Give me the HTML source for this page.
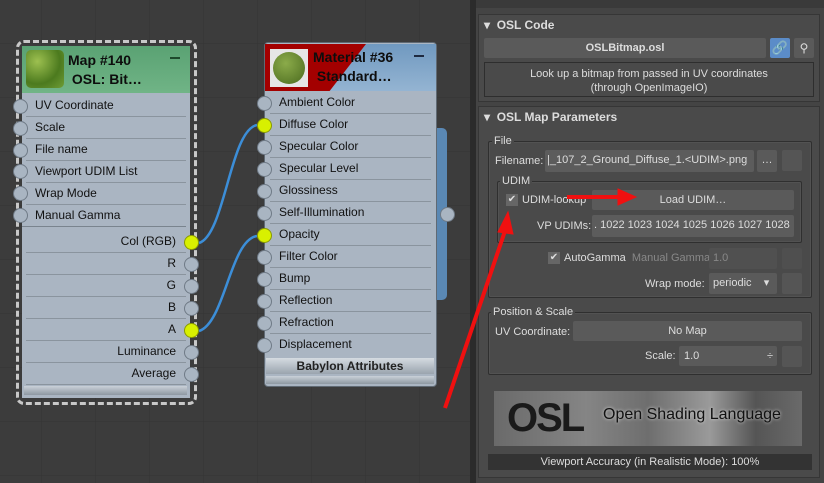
<!DOCTYPE html><html><head><style>
*{margin:0;padding:0;box-sizing:border-box}
body{width:824px;height:483px;overflow:hidden;background:#3c3c3c;font-family:"Liberation Sans",sans-serif;position:relative}
.a{position:absolute}
.row{position:absolute;height:22px;font-size:12px;color:#111;line-height:20px;border-bottom:1px solid #8a949e}
.sock{position:absolute;width:15px;height:15px;border-radius:50%;background:#a9b5c2;border:1px solid #6f7a86}
.y{background:#d8f000;border-color:#8a9a00}
.p{color:#ddd;font-size:11px}
.btn{position:absolute;background:#5a5a5a;border-radius:2px;color:#ddd;font-size:11px;text-align:center;line-height:20px}
.sq{position:absolute;width:20px;height:21px;background:#555;border-radius:2px}
.grp{position:absolute;border:1px solid #2f2f2f;border-radius:2px;box-shadow:inset 0 0 0 1px #525252}
.gl{position:absolute;background:#444;color:#ddd;font-size:11px;padding:0 2px;line-height:12px}
</style></head><body>
<svg class="a" style="left:0;top:0" width="470" height="483">
<defs><pattern id="g" width="54" height="54" patternUnits="userSpaceOnUse" x="-12" y="-10"><path d="M54 0V54M0 54H54" stroke="#343434" stroke-width="1" fill="none"/></pattern></defs>
<rect width="470" height="483" fill="url(#g)"/>
</svg>
<!-- left node -->
<div class="a" style="left:16px;top:40px;width:181px;height:365px;border:3px dashed #c8c8c8;border-radius:8px"></div>
<div class="a" style="left:22px;top:46px;width:168px;height:352px;background:#aab5c2"></div>
<div class="a" style="left:22px;top:46px;width:168px;height:47px;background:linear-gradient(#5aa273,#70b486)"></div>
<div class="a" style="left:26px;top:50px;width:38px;height:38px;border-radius:5px;background:radial-gradient(circle at 30% 30%,#9dc050,#4c7a1e 60%,#6f9d36)"></div>
<div class="a" style="left:68px;top:51px;font-weight:bold;font-size:14px;color:#0d0d0d;line-height:19px">Map #140<br>&nbsp;OSL: Bit…</div>
<div class="a" style="left:170px;top:57px;width:10px;height:2px;background:#1e4a2c"></div>
<div class="row" style="left:26px;top:95px;width:160px;padding-left:9px">UV Coordinate</div>
<div class="row" style="left:26px;top:117px;width:160px;padding-left:9px">Scale</div>
<div class="row" style="left:26px;top:139px;width:160px;padding-left:9px">File name</div>
<div class="row" style="left:26px;top:161px;width:160px;padding-left:9px">Viewport UDIM List</div>
<div class="row" style="left:26px;top:183px;width:160px;padding-left:9px">Wrap Mode</div>
<div class="row" style="left:22px;top:205px;width:164px;padding-left:13px;border-bottom:1px solid #7a848e">Manual Gamma</div>
<div class="row" style="left:26px;top:231px;width:160px;padding-right:10px;text-align:right">Col (RGB)</div>
<div class="row" style="left:26px;top:253px;width:160px;padding-right:10px;text-align:right">R</div>
<div class="row" style="left:26px;top:275px;width:160px;padding-right:10px;text-align:right">G</div>
<div class="row" style="left:26px;top:297px;width:160px;padding-right:10px;text-align:right">B</div>
<div class="row" style="left:26px;top:319px;width:160px;padding-right:10px;text-align:right">A</div>
<div class="row" style="left:26px;top:341px;width:160px;padding-right:10px;text-align:right">Luminance</div>
<div class="row" style="left:26px;top:363px;width:160px;padding-right:10px;text-align:right">Average</div>
<div class="a" style="left:24px;top:386px;width:163px;height:9px;background:linear-gradient(#c9d0d8,#8e98a2)"></div>
<div class="sock" style="left:13px;top:99px"></div><div class="sock" style="left:13px;top:121px"></div><div class="sock" style="left:13px;top:143px"></div><div class="sock" style="left:13px;top:164px"></div><div class="sock" style="left:13px;top:186px"></div><div class="sock" style="left:13px;top:208px"></div>
<div class="sock y" style="left:184px;top:235px"></div><div class="sock" style="left:184px;top:257px"></div><div class="sock" style="left:184px;top:279px"></div><div class="sock" style="left:184px;top:301px"></div><div class="sock y" style="left:184px;top:323px"></div><div class="sock" style="left:184px;top:345px"></div><div class="sock" style="left:184px;top:367px"></div>
<!-- material node -->
<div class="a" style="left:435px;top:128px;width:12px;height:172px;background:#5a88b4;border-radius:0 5px 5px 0"></div>
<div class="sock" style="left:440px;top:207px"></div>
<div class="a" style="left:264px;top:42px;width:173px;height:345px;background:#aab5c2;border:1px solid #606a74;border-radius:4px"></div>
<div class="a" style="left:265px;top:44px;width:171px;height:47px;background:linear-gradient(#7099c0,#94b4d2)"></div>
<div class="a" style="left:265px;top:44px;width:101px;height:47px;background:#a30000;clip-path:polygon(0 0,100% 0,64% 100%,0 100%)"></div>
<div class="a" style="left:270px;top:49px;width:38px;height:38px;background:#e6e6e6"><div style="margin:3px;width:32px;height:32px;border-radius:50%;background:radial-gradient(circle at 40% 35%,#8bab4a,#4a6a1e)"></div></div>
<div class="a" style="left:313px;top:48px;font-weight:bold;font-size:14px;color:#0d0d0d;line-height:19px">Material #36<br>&nbsp;Standard…</div>
<div class="a" style="left:414px;top:55px;width:10px;height:2px;background:#1e2a40"></div>
<div class="row" style="left:270px;top:92px;width:161px;padding-left:9px">Ambient Color</div>
<div class="row" style="left:270px;top:114px;width:161px;padding-left:9px">Diffuse Color</div>
<div class="row" style="left:270px;top:136px;width:161px;padding-left:9px">Specular Color</div>
<div class="row" style="left:270px;top:158px;width:161px;padding-left:9px">Specular Level</div>
<div class="row" style="left:270px;top:180px;width:161px;padding-left:9px">Glossiness</div>
<div class="row" style="left:270px;top:202px;width:161px;padding-left:9px">Self-Illumination</div>
<div class="row" style="left:270px;top:224px;width:161px;padding-left:9px">Opacity</div>
<div class="row" style="left:270px;top:246px;width:161px;padding-left:9px">Filter Color</div>
<div class="row" style="left:270px;top:268px;width:161px;padding-left:9px">Bump</div>
<div class="row" style="left:270px;top:290px;width:161px;padding-left:9px">Reflection</div>
<div class="row" style="left:270px;top:312px;width:161px;padding-left:9px">Refraction</div>
<div class="row" style="left:270px;top:334px;width:161px;padding-left:9px;border:0">Displacement</div>
<div class="a" style="left:266px;top:358px;width:168px;height:16px;background:linear-gradient(#d5dbe1,#9aa4ae);font-size:12px;font-weight:bold;color:#222;text-align:center;line-height:16px">Babylon Attributes</div>
<div class="a" style="left:266px;top:376px;width:168px;height:8px;background:linear-gradient(#c9d0d8,#8e98a2)"></div>
<div class="sock" style="left:257px;top:96px"></div><div class="sock y" style="left:257px;top:118px"></div><div class="sock" style="left:257px;top:140px"></div><div class="sock" style="left:257px;top:162px"></div><div class="sock" style="left:257px;top:184px"></div><div class="sock" style="left:257px;top:206px"></div><div class="sock y" style="left:257px;top:228px"></div><div class="sock" style="left:257px;top:250px"></div><div class="sock" style="left:257px;top:272px"></div><div class="sock" style="left:257px;top:294px"></div><div class="sock" style="left:257px;top:316px"></div><div class="sock" style="left:257px;top:338px"></div>
<svg class="a" style="left:0;top:0" width="470" height="483"><g fill="none" stroke="#3c8ed8" stroke-width="2.5"><path d="M199 243C225 235 230 130 257 125"/><path d="M199 331C225 323 230 240 257 236"/></g></svg>
<!-- right panel -->
<div class="a" style="left:470px;top:0;width:6px;height:483px;background:#2b2b2b"></div>
<div class="a" style="left:476px;top:0;width:348px;height:483px;background:#444"></div>
<div class="a" style="left:476px;top:0;width:348px;height:8px;background:#3a3a3a"></div>
<div class="a" style="left:478px;top:14px;width:342px;height:88px;background:#4a4a4a;border:1px solid #363636"></div>
<div class="a p" style="left:484px;top:18px;font-weight:bold;font-size:12px">▾&nbsp; OSL Code</div>
<div class="btn" style="left:484px;top:38px;width:282px;font-weight:bold">OSLBitmap.osl</div>
<div class="a" style="left:770px;top:38px;width:20px;height:20px;background:#5b8cc8;border-radius:2px;color:#eee;font-size:13px;text-align:center;line-height:20px">🔗</div>
<div class="btn" style="left:794px;top:38px;width:20px;font-size:12px">⚲</div>
<div class="a p" style="left:484px;top:62px;width:330px;height:35px;border:1px solid #2e2e2e;text-align:center;line-height:14px;padding-top:4px;font-size:11px">Look up a bitmap from passed in UV coordinates<br>(through OpenImageIO)</div>
<div class="a" style="left:478px;top:106px;width:342px;height:372px;background:#4a4a4a;border:1px solid #363636"></div>
<div class="a p" style="left:484px;top:110px;font-weight:bold;font-size:12px">▾&nbsp; OSL Map Parameters</div>
<div class="grp" style="left:488px;top:141px;width:324px;height:157px"></div><div class="gl" style="left:492px;top:135px;background:#4a4a4a">File</div>
<div class="a p" style="left:495px;top:155px">Filename:</div>
<div class="btn" style="left:545px;top:150px;width:209px;height:22px;background:#5c5c5c;text-align:left;padding-left:2px">|_107_2_Ground_Diffuse_1.&lt;UDIM&gt;.png</div>
<div class="btn" style="left:757px;top:150px;width:20px;height:22px">…</div><div class="sq" style="left:782px;top:150px"></div>
<div class="grp" style="left:497px;top:181px;width:305px;height:62px"></div><div class="gl" style="left:500px;top:175px;background:#4a4a4a">UDIM</div>
<div class="a" style="left:506px;top:194px;width:12px;height:12px;background:#666;color:#ddd;font-size:10px;line-height:12px;text-align:center">✔</div>
<div class="a p" style="left:522px;top:194px">UDIM-lookup</div>
<div class="btn" style="left:592px;top:190px;width:202px;height:20px">Load UDIM…</div>
<div class="a p" style="left:537px;top:220px">VP UDIMs:</div>
<div class="btn" style="left:592px;top:215px;width:202px;height:22px;background:#5c5c5c;text-align:left;padding-left:2px">. 1022 1023 1024 1025 1026 1027 1028</div>
<div class="a" style="left:548px;top:252px;width:12px;height:12px;background:#666;color:#ddd;font-size:10px;line-height:12px;text-align:center">✔</div>
<div class="a p" style="left:564px;top:252px">AutoGamma <span style="color:#888">&nbsp;Manual Gamma:</span></div>
<div class="btn" style="left:709px;top:248px;width:68px;height:21px;text-align:left;padding-left:4px;color:#888;background:#505050">1.0</div><div class="sq" style="left:782px;top:248px;background:#4f4f4f"></div>
<div class="a p" style="left:645px;top:278px">Wrap mode:</div>
<div class="btn" style="left:709px;top:273px;width:68px;height:21px;text-align:left;padding-left:4px">periodic &nbsp;&nbsp;&nbsp;▾</div><div class="sq" style="left:782px;top:273px"></div>
<div class="grp" style="left:488px;top:312px;width:324px;height:63px"></div><div class="gl" style="left:491px;top:306px;background:#4a4a4a">Position &amp; Scale</div>
<div class="a p" style="left:495px;top:326px">UV Coordinate:</div>
<div class="btn" style="left:573px;top:321px;width:229px;height:20px">No Map</div>
<div class="a p" style="left:645px;top:350px">Scale:</div>
<div class="btn" style="left:679px;top:346px;width:98px;height:20px;text-align:left;padding-left:5px">1.0<span style="float:right;padding-right:4px">÷</span></div><div class="sq" style="left:782px;top:346px"></div>
<div class="a" style="left:494px;top:391px;width:308px;height:55px;background:linear-gradient(90deg,#6a6a6a,#858585 30%,#6e6e6e 50%,#9a9a9a 70%,#555 85%,#6a6a6a)"></div>
<div class="a" style="left:507px;top:394px;font-size:40px;font-weight:bold;color:#1a1a1a;line-height:48px;letter-spacing:-2px">OSL</div>
<div class="a" style="left:603px;top:405px;font-size:16px;color:#111;line-height:20px;text-shadow:0 0 3px #ddd">Open Shading Language</div>
<div class="a p" style="left:488px;top:454px;width:324px;height:16px;background:#333;text-align:center;line-height:16px">Viewport Accuracy (in Realistic Mode): 100%</div>
<svg class="a" style="left:0;top:0" width="824" height="483"><g stroke="#f01010" fill="#f01010"><path d="M445 408L506 228" stroke-width="4"/><path d="M508 212L498 232L513 234Z"/><path d="M567 197L622 197" stroke-width="4"/><path d="M636 197L618 189L618 205Z"/></g></svg>
</body></html>
